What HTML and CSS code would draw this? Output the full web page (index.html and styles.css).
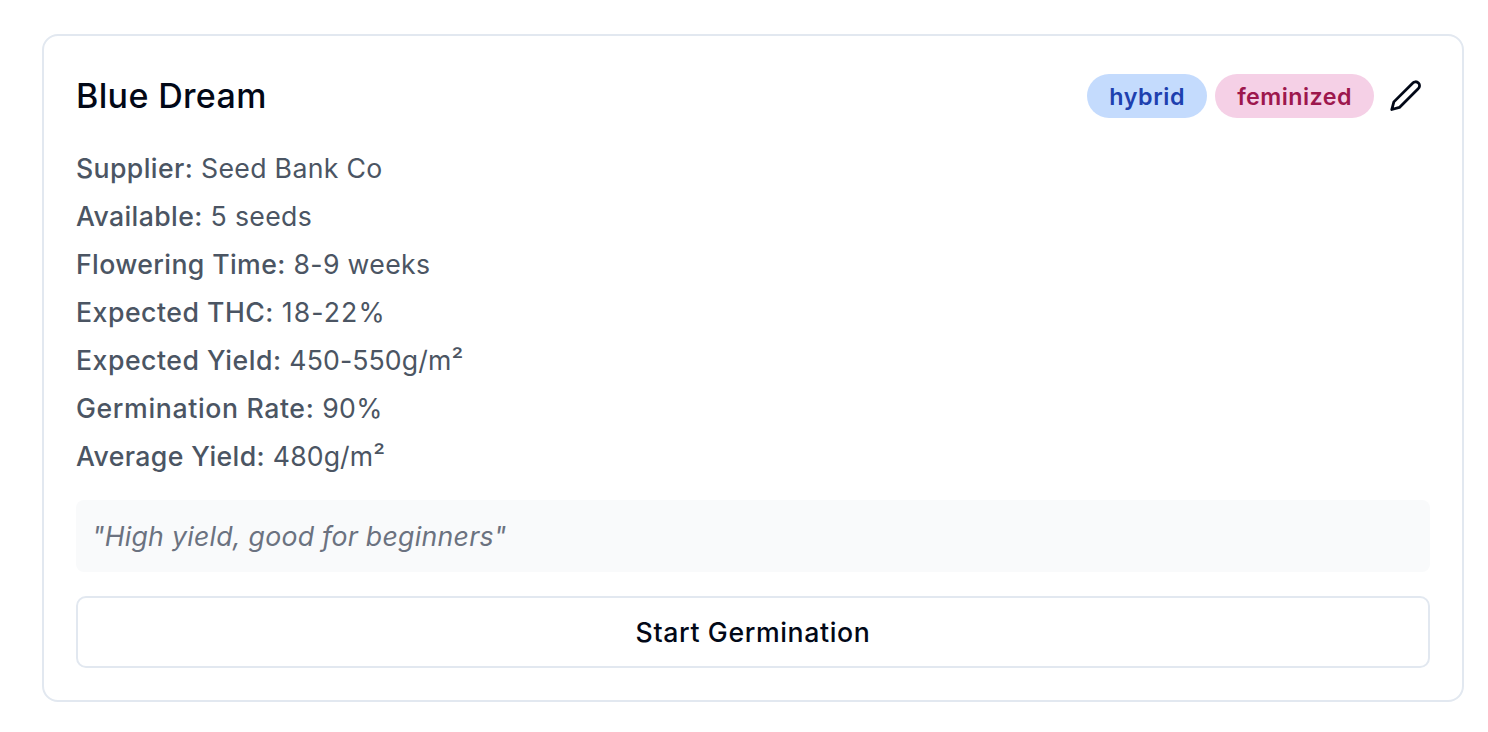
FILE: index.html
```html
<!DOCTYPE html>
<html lang="en">
<head>
<meta charset="utf-8">
<title>Blue Dream</title>
<link rel="stylesheet" href="styles.css">
</head>
<body>
<div class="card">
  <div class="header">
    <h3 class="title">Blue Dream</h3>
    <div class="actions">
      <span class="badge badge-blue">hybrid</span>
      <span class="badge badge-pink">feminized</span>
      <button class="icon-btn" aria-label="Edit">
        <svg class="icon" viewBox="0 0 24 24" fill="none" stroke="currentColor" stroke-width="2" stroke-linecap="round" stroke-linejoin="round"><path d="M17 3a2.85 2.83 0 1 1 4 4L7.5 20.5 2 22l1.5-5.5L17 3z"/></svg>
      </button>
    </div>
  </div>
  <div class="details">
    <p class="row"><span class="label">Supplier:</span> Seed Bank Co</p>
    <p class="row"><span class="label">Available:</span> 5 seeds</p>
    <p class="row"><span class="label">Flowering Time:</span> 8-9 weeks</p>
    <p class="row"><span class="label label-wide">Expected THC:</span> <span class="value-wide">18-22%</span></p>
    <p class="row"><span class="label label-wide">Expected Yield:</span> <span class="value-tight">450-550g/m²</span></p>
    <p class="row"><span class="label label-wider">Germination Rate:</span> 90%</p>
    <p class="row"><span class="label">Average Yield:</span> <span class="value-tight">480g/m²</span></p>
  </div>
  <div class="note">"High yield, good for beginners"</div>
  <button class="start">Start Germination</button>
</div>
</body>
</html>
```

FILE: styles.css
```css
* { box-sizing: border-box; }
html, body { margin: 0; background: #fff; }
body {
  padding: 34px 24px 0 42px;
  font-family: Inter, "Liberation Sans", sans-serif;
}
.card {
  height: 668px;
  border: 2px solid #e2e8f0;
  border-radius: 16px;
  padding: 38px 32px 32px;
  background: #fff;
}
.header {
  display: flex;
  justify-content: space-between;
  align-items: center;
  height: 44px;
}
.title {
  margin: 0;
  font-size: 34px;
  font-weight: 500;
  letter-spacing: 0.35px;
  color: #020817;
  line-height: 44px;
}
.actions {
  display: flex;
  align-items: center;
  gap: 8px;
}
.badge {
  height: 44px;
  padding: 0 22px;
  border-radius: 22px;
  font-size: 23.3px;
  font-weight: 600;
  letter-spacing: 0.45px;
  line-height: 46px;
}
.badge-blue { background: #c4dbfd; color: #1e40af; letter-spacing: 0.6px; }
.badge-pink { background: #f5d0e6; color: #9d174d; }
.icon-btn {
  width: 48px;
  height: 44px;
  padding: 0;
  display: flex;
  align-items: center;
  justify-content: center;
  border: 0;
  background: none;
  color: #020817;
}
.icon { width: 33.3px; height: 33.3px; display: block; }
.details { margin-top: 26px; }
.row {
  margin: 0;
  height: 48px;
  line-height: 48px;
  font-size: 26.67px;
  letter-spacing: 0.33px;
  color: #4b5563;
}
.label { font-weight: 500; letter-spacing: 0.38px; }
.label-wide { letter-spacing: 0.5px; }
.label-wider { letter-spacing: 0.63px; }
.value-wide { letter-spacing: 1.1px; }
.value-tight { letter-spacing: 0.1px; }
.note {
  margin-top: 20px;
  height: 72px;
  padding: 0 16px;
  border-radius: 8px;
  background: #f9fafb;
  color: #6b7280;
  font-style: italic;
  font-size: 26.67px;
  letter-spacing: 0.27px;
  line-height: 72px;
}
.start {
  display: block;
  width: 100%;
  margin-top: 24px;
  height: 72px;
  border: 2px solid #e2e8f0;
  border-radius: 10px;
  background: #fff;
  color: #020817;
  font-family: inherit;
  font-size: 26.67px;
  font-weight: 500;
  letter-spacing: 0.62px;
}
```
